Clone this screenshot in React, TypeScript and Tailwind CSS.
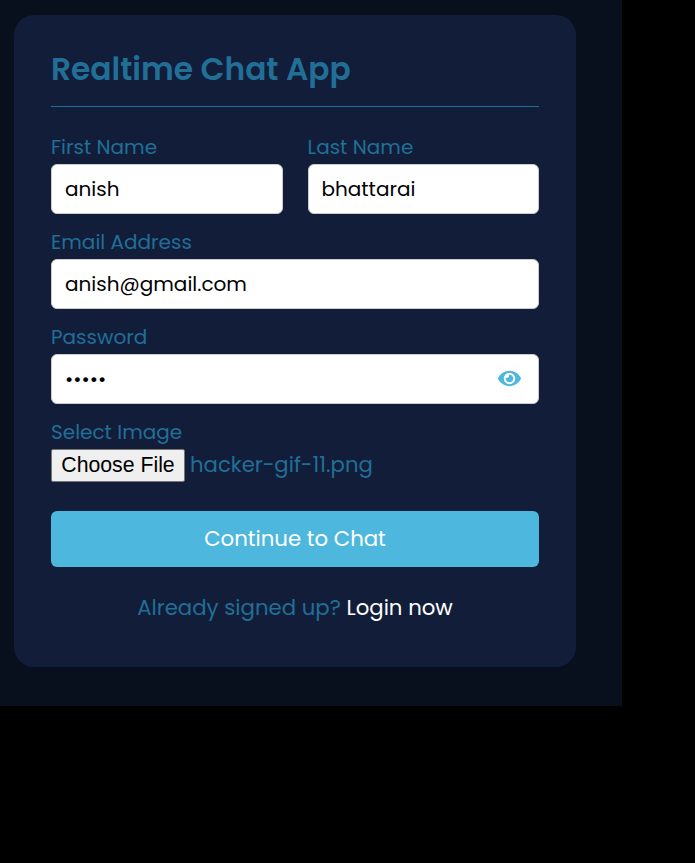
import type { ReactNode } from "react";
import { FaEye } from "react-icons/fa";

function Field({ label, children }: { label: string; children: ReactNode }) {
  return (
    <div className="flex h-[95px] min-w-0 flex-1 flex-col">
      <label className="flex h-[28px] shrink-0 items-center whitespace-nowrap text-[20px]">{label}</label>
      <div className="mt-[3px] flex h-[50px] shrink-0 items-center justify-between rounded-[6px] border border-[#cccccc] bg-white pl-[13px] pr-[17.5px] text-[20px] text-black">
        {children}
      </div>
    </div>
  );
}

export default function App() {
  return (
    <div className="h-[863px] w-[695px] overflow-hidden bg-black font-['Poppins','Inter',sans-serif] text-[#216f96]">
      <div className="h-[706px] w-[622px] bg-[#080f1d] pl-[14px] pt-[15px]">
        <main className="h-[652px] w-[562px] rounded-[20px] bg-[#121d3a] px-[37px] pt-[30px]">
          <header className="flex h-[62px] border-b border-[#216f96]">
            <h1 className="mt-px h-[46px] whitespace-nowrap text-[31.25px] font-semibold leading-[46px]">Realtime Chat App</h1>
          </header>
          <form className="mt-[26px]">
            <div className="flex gap-[25px]">
              <Field label="First Name">
                <span>anish</span>
              </Field>
              <Field label="Last Name">
                <span>bhattarai</span>
              </Field>
            </div>
            <Field label="Email Address">
              <span>anish@gmail.com</span>
            </Field>
            <Field label="Password">
              <span>•••••</span>
              <FaEye className="mb-[2px] h-[21px] w-[23px] text-[#4db7de]" />
            </Field>
            <div className="flex h-[28px] items-center whitespace-nowrap text-[20px]">Select Image</div>
            <div className="mt-[3px] flex h-[33px] items-center">
              <button type="button" className="h-[33px] w-[134px] whitespace-nowrap rounded-[2px] border border-[#767676] bg-[#efefef] pb-px font-['Liberation_Sans',sans-serif] text-[21.25px] leading-[30px] text-black">Choose File</button>
              <span className="mb-[2px] ml-[5px] whitespace-nowrap text-[21.2px]">hacker-gif-11.png</span>
            </div>
            <button type="button" className="mt-[29px] flex h-[56px] w-full items-center justify-center rounded-[6px] bg-[#4db7de] text-[21.25px] text-white">Continue to Chat</button>
          </form>
          <p className="mt-[25px] h-[32px] whitespace-nowrap text-center text-[21.25px] leading-[32px]">
            Already signed up? <a className="text-white">Login now</a>
          </p>
        </main>
      </div>
    </div>
  );
}
